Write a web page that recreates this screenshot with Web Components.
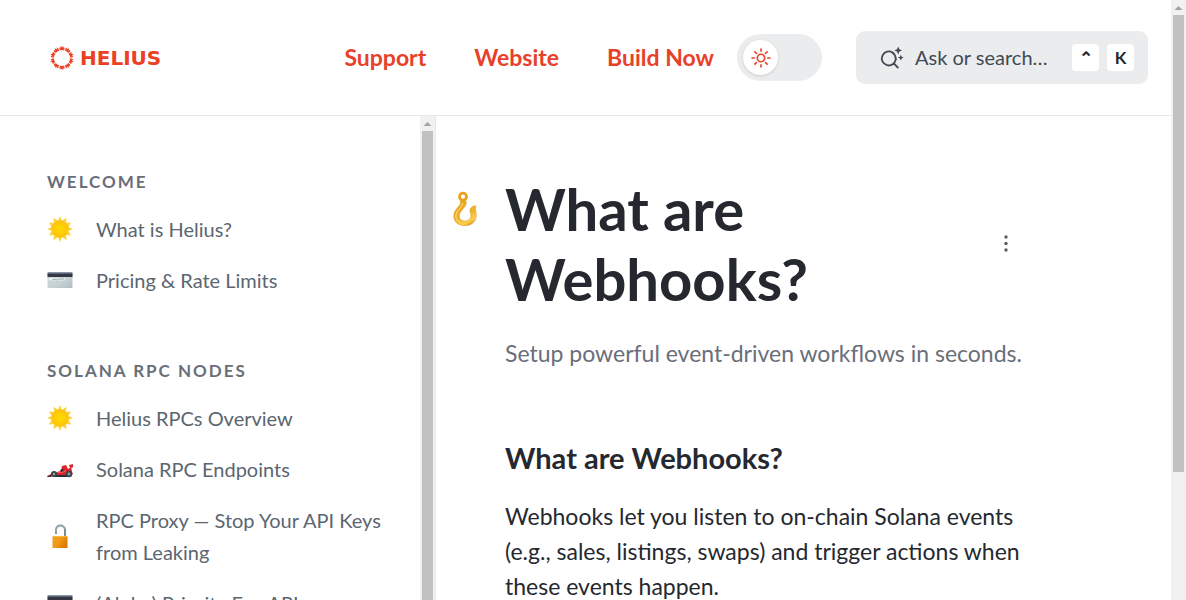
<!DOCTYPE html>
<html lang="en">
<head>
<meta charset="utf-8">
<meta name="viewport" content="width=device-width, initial-scale=1">
<title>What are Webhooks? - Helius Docs</title>
<style>
html, body { margin: 0; height: 100%; }
body { font-family: Lato, "Liberation Sans", sans-serif; color: #25282f; background: #fff; overflow: hidden; }
</style>
</head>
<body>
<docs-app>
  <docs-header slot="header">
    <helius-logo slot="logo"></helius-logo>
    <nav-link href="#support">Support</nav-link>
    <nav-link href="#website">Website</nav-link>
    <nav-link href="#build">Build Now</nav-link>
    <theme-toggle slot="tools"></theme-toggle>
    <search-button slot="tools">Ask or search…</search-button>
  </docs-header>
  <docs-sidebar slot="sidebar">
    <nav-group heading="Welcome">
      <nav-item icon="sun" href="#what">What is Helius?</nav-item>
      <nav-item icon="card" href="#pricing">Pricing &amp; Rate Limits</nav-item>
    </nav-group>
    <nav-group heading="Solana RPC Nodes">
      <nav-item icon="sun" href="#rpcs">Helius RPCs Overview</nav-item>
      <nav-item icon="car" href="#endpoints">Solana RPC Endpoints</nav-item>
      <nav-item icon="lock" href="#proxy">RPC Proxy — Stop Your API Keys from Leaking</nav-item>
      <nav-item icon="card" href="#priority">(Alpha) Priority Fee API</nav-item>
    </nav-group>
  </docs-sidebar>
  <docs-article>
    <span slot="title">What are Webhooks?</span>
    <span slot="lead">Setup powerful event-driven workflows in seconds.</span>
    <span slot="section">What are Webhooks?</span>
    Webhooks let you listen to on-chain Solana events (e.g., sales, listings, swaps) and trigger actions when these events happen.
  </docs-article>
</docs-app>

<script>
const ICONS = {
  sun: `<svg viewBox="0 0 26 26"><defs><radialGradient id="s"><stop offset="0" stop-color="#ffda00"/><stop offset=".7" stop-color="#ffcb08"/><stop offset="1" stop-color="#fbbd14"/></radialGradient></defs><path fill="#fdd33c" d="M13 0l2 4.800 4.500-3-.4 5.200 5.200-.4-3 4.400L26 13l-4.700 2 3 4.500-5.200-.5.4 5.200-4.500-3L13 26l-2-4.800-4.500 3 .4-5.200-5.200.5 3-4.500L0 13l4.700-2-3-4.400 5.200.4-.4-5.200 4.500 3z"/><circle cx="13" cy="13" r="8.500" fill="url(#s)"/></svg>`,
  card: `<svg viewBox="0 0 26 26"><defs><linearGradient id="c" x2="1" y2="1"><stop stop-color="#cfdadd"/><stop offset=".6" stop-color="#c6d1d4"/><stop offset="1" stop-color="#aebdc2"/></linearGradient></defs><rect x=".5" y="5" width="25" height="16" rx="1" fill="url(#c)"/><path fill="#8794a4" d="M.5 6q0-1 1-1h23q1 0 1 1v1H.5z"/><path fill="#363745" d="M.5 6.500h25v3.500H.5z"/><path fill="#eceff0" d="M2 11h16v2.500H2z"/><path d="M5 13l3-1 1 1 3-1 2 0 3 0" fill="none" stroke="#777f87" stroke-width=".6"/></svg>`,
  car: `<svg viewBox="0 0 26 26"><path fill="#df2229" d="M0 20l6-3 8-2 1-5 4-1 2 4 2-1 0-2h1l1 6 1 2-8 3H8z"/><path fill="#d9272f" d="M22 9l4-1v3.500l-3 .5z"/><path fill="#ff5357" d="M8 17l8-3 4 1-5 2z"/><path fill="#272f38" d="M0 20.500l4-1.500v2H0zM8 19h12v2H8zM13 14l3-1 1 2-3 1z"/><circle cx="7" cy="18" r="3" fill="#38424b"/><circle cx="7" cy="18" r="1.200" fill="#9da5ab"/><circle cx="22" cy="18" r="3.300" fill="#38424b"/><circle cx="22" cy="18" r="1.400" fill="#929ca3"/></svg>`,
  lock: `<svg viewBox="0 0 26 26"><defs><linearGradient id="l" x2="1" y2=".5"><stop stop-color="#e7a020"/><stop offset=".5" stop-color="#f39b13"/><stop offset="1" stop-color="#d97b05"/></linearGradient></defs><path d="M9 11V7c0-6 9-6 9 0v7" fill="none" stroke="#788c94" stroke-width="2"/><path d="M9 10V7c0-5 8-6 9-1" fill="none" stroke="#b5c3c7" stroke-width=".8"/><rect x="5.500" y="13" width="15" height="12" rx=".6" fill="url(#l)"/><path stroke="#ffc857" stroke-width=".7" d="M6 13.400h14"/></svg>`,
  hook: `<svg viewBox="0 0 24 36"><defs><linearGradient id="h" x1=".2" x2=".7" y2="1"><stop stop-color="#e9a21b"/><stop offset=".6" stop-color="#f0b42c"/><stop offset=".85" stop-color="#ffd04f"/><stop offset="1" stop-color="#d9951a"/></linearGradient></defs><path fill="url(#h)" stroke="#d7941b" stroke-width=".5" d="M7.500 9.500h5c2.200 3.600-1 6.400-3 9-1.700 2.200-3.200 4.200-3.200 6.500 0 3.400 2.500 5 5.600 5 4 0 6.300-2.600 6-6-.2-2-1-3-1-4.600 0-2.400 2.600-4.600 5.600-4.700 1 1.200-.3 2.100 0 4 .3 2 1 3.800.8 6.300-.5 5.700-5 9.700-11.300 9.700C5.300 34.700.8 31.200.8 25c0-4.600 2.600-7 4.800-9.600 1.700-2 2.200-3.600 1.900-5.900z"/><circle cx="10" cy="5.700" r="3.500" fill="none" stroke="#e9a21b" stroke-width="2.800"/><path d="M9.500 12c-.5 5-6.500 7-6.700 13 0 3 1.500 5.300 4 6.300" fill="none" stroke="#ffe08a" stroke-width="1"/></svg>`
};

const define = (name, html, setup) => {
  const template = document.createElement('template');
  template.innerHTML = html;
  customElements.define(name, class extends HTMLElement {
    constructor() {
      super();
      this.attachShadow({ mode: 'open' }).append(template.content.cloneNode(true));
    }
    connectedCallback() { if (setup) setup(this, this.shadowRoot); }
  });
};

define('scroll-rail', `<style>
:host { display: flex; flex-direction: column; align-items: center; flex: 0 0 15px; box-sizing: border-box; background: #f1f1f1; }
svg { flex: 0 0 15px; width: 15px; height: 15px; }
div { width: 11px; height: var(--thumb, 100%); background: #c1c1c1; }
</style><svg viewBox="0 0 15 15" aria-hidden="true"><path d="M3.500 10L7.500 6l4 4z" fill="#a3a3a3"/></svg><div></div>`);

define('docs-app', `<style>
:host { display: flex; height: 100vh; }
.page { flex: 1; min-width: 0; display: flex; flex-direction: column; }
.body { flex: 1; min-height: 0; display: flex; }
.window { --thumb: calc(80vh - 23px); }
</style>
<div class="page"><slot name="header"></slot><div class="body"><slot name="sidebar"></slot><slot></slot></div></div>
<scroll-rail class="window"></scroll-rail>`);

define('docs-header', `<style>
:host { display: block; border-bottom: 1px solid #e6e7e8; }
header { display: flex; align-items: center; padding: 31px 23px 31px 49px; }
nav { display: flex; gap: 48px; margin-left: auto; margin-right: 23px; padding-bottom: 2px; }
.tools { display: flex; align-items: center; gap: 34px; }
</style><header><slot name="logo"></slot><nav><slot></slot></nav><div class="tools"><slot name="tools"></slot></div></header>`);

define('helius-logo', `<style>
:host { display: block; }
a { display: flex; align-items: center; gap: 5px; color: #eb4023; text-decoration: none; font: bold 20px/26px "DejaVu Sans", sans-serif; }
svg { width: 26px; height: 26px; }
</style><a href="#home"><svg viewBox="-13 -13 26 26" aria-hidden="true"><g fill="currentColor"></g></svg><span>HELIUS</span></a>`,
(el, root) => {
  const rays = [];
  for (let i = 0; i < 10; i++) {
    rays.push(`<path transform="rotate(${i * 36})" d="M0-12.200L2.300-7.600Q0-8.500-2.300-7.600z"/><path transform="rotate(${i * 36 + 18})" d="M-2.100-11.600L-.4-10.200-.6-8.200-1.800-8.800zM2.100-11.600L.4-10.200.6-8.200 1.800-8.800z"/>`);
  }
  root.querySelector('g').innerHTML = rays.join('');
});

define('nav-link', `<style>
:host { display: block; }
a { color: #e8412a; font-size: 23px; line-height: 32px; font-weight: 700; text-decoration: none; white-space: nowrap; }
</style><a><slot></slot></a>`, (el, root) => { root.querySelector('a').href = el.getAttribute('href'); });

define('theme-toggle', `<style>
:host { display: block; }
label { display: grid; align-items: center; cursor: pointer; }
input, span { grid-area: 1 / 1; }
input { appearance: none; margin: 0; width: 85px; height: 47px; border-radius: 24px; background: #ebeced; }
span { display: flex; align-items: center; justify-content: center; margin-left: 6px; width: 35px; height: 35px; border-radius: 50%; background: #fff; box-shadow: 0 1px 3px #0002; pointer-events: none; }
svg { width: 20px; height: 20px; }
</style><label><input type="checkbox" role="switch" aria-label="Dark mode"><span><svg viewBox="0 0 20 20" fill="none" stroke="#e8412a" stroke-width="1.600" stroke-linecap="round" aria-hidden="true"><circle cx="10" cy="10" r="3.700"/><path d="M10 1v2.300M10 16.700V19M1 10h2.300M16.700 10H19M3.900 3.900l1.500 1.500M14.600 14.600l1.500 1.500M3.900 16.100l1.500-1.500M14.600 5.400l1.500-1.500"/></svg></span></label>`);

define('search-button', `<style>
:host { display: block; }
button { display: flex; align-items: center; box-sizing: border-box; width: 292px; height: 53px; padding: 0 14px 0 24px; border: 0; border-radius: 9px; background: #ebeced; color: #414a53; font: 20px/32px Lato, sans-serif; }
svg { width: 24px; height: 24px; margin-right: 11px; }
.label { padding-bottom: 2px; }
.keys { display: flex; gap: 8px; margin-left: auto; }
kbd { width: 27px; height: 27px; border-radius: 4px; background: #fff; color: #25282f; font: 700 17px/27px Lato, sans-serif; text-align: center; }
</style><button type="button"><svg viewBox="0 0 24 24" aria-hidden="true"><g fill="none" stroke="#414a53" stroke-width="1.800" stroke-linecap="round"><path d="M12.800 6.700A7 7 0 1 0 15.800 13.200M13.600 17.200l4.200 4.300"/><path d="M12.800 6.700Q15.600 8.800 15.800 13.200"/></g><path fill="#414a53" d="M18.200.4l1.200 2.800 2.800 1.200-2.800 1.200-1.200 2.800-1.200-2.800-2.800-1.200 2.800-1.200zM20.800 8.700l.9 2 2 .9-2 .9-.9 2-.9-2-2-.9 2-.9z"/></svg><span class="label"><slot></slot></span><span class="keys"><kbd>⌃</kbd><kbd>K</kbd></span></button>`);

define('docs-sidebar', `<style>
:host { display: flex; flex: 0 0 435px; min-height: 0; overflow: hidden; border-right: 1px solid #e6e7e8; }
nav { flex: 1; padding: 53px 24px 0 47px; display: flex; flex-direction: column; gap: 52px; }
</style><nav><slot></slot></nav><scroll-rail></scroll-rail>`);

define('nav-group', `<style>
:host { display: block; }
h2 { margin: 0 0 9px; font-size: 17px; line-height: 26px; font-weight: 700; letter-spacing: 2px; text-transform: uppercase; color: #696e79; }
</style><h2></h2><slot></slot>`, (el, root) => { root.querySelector('h2').textContent = el.getAttribute('heading'); });

define('nav-item', `<style>
:host { display: block; }
a { display: flex; align-items: center; gap: 23px; padding: 9px 0 10px; font-size: 20px; line-height: 32px; color: #5b6670; text-decoration: none; }
span { flex: 0 0 26px; height: 26px; }
svg { display: block; width: 26px; height: 26px; }
</style><a><span aria-hidden="true"></span><div><slot></slot></div></a>`, (el, root) => {
  root.querySelector('a').href = el.getAttribute('href');
  root.querySelector('span').innerHTML = ICONS[el.getAttribute('icon')];
});

define('docs-article', `<style>
:host { display: block; flex: 1; min-width: 0; overflow: hidden; }
main { display: grid; grid-template-columns: 24px minmax(0, 520px); column-gap: 28px; padding: 58px 16px 0 17px; }
main > * { grid-column: 2; }
.icon { grid-column: 1; padding-top: 17px; }
.icon svg { display: block; width: 24px; height: 36px; }
.title { display: flex; align-items: center; justify-content: space-between; padding-right: 5px; }
h1 { margin: 0; font-size: 58px; line-height: 70px; font-weight: 700; }
button { display: flex; align-items: center; justify-content: center; padding: 0; width: 32px; height: 36px; border: 0; background: none; }
button svg { width: 20px; height: 32px; }
p { margin: 0; }
.lead { margin-top: 22px; font-size: 23px; line-height: 35px; color: #696e79; }
h2 { margin: 69px 0 24px; font-size: 29px; line-height: 35px; font-weight: 700; }
.text { font-size: 23px; line-height: 35px; }
</style><main>
<div class="icon" aria-hidden="true">${ICONS.hook}</div>
<div class="title"><h1><slot name="title"></slot></h1><button type="button" aria-label="More actions"><svg viewBox="0 0 20 32" fill="#595e69"><circle cx="10" cy="9" r="1.700"/><circle cx="10" cy="15.500" r="1.700"/><circle cx="10" cy="22" r="1.700"/></svg></button></div>
<p class="lead"><slot name="lead"></slot></p>
<h2><slot name="section"></slot></h2>
<p class="text"><slot></slot></p>
</main>`);
</script>
</body>
</html>
